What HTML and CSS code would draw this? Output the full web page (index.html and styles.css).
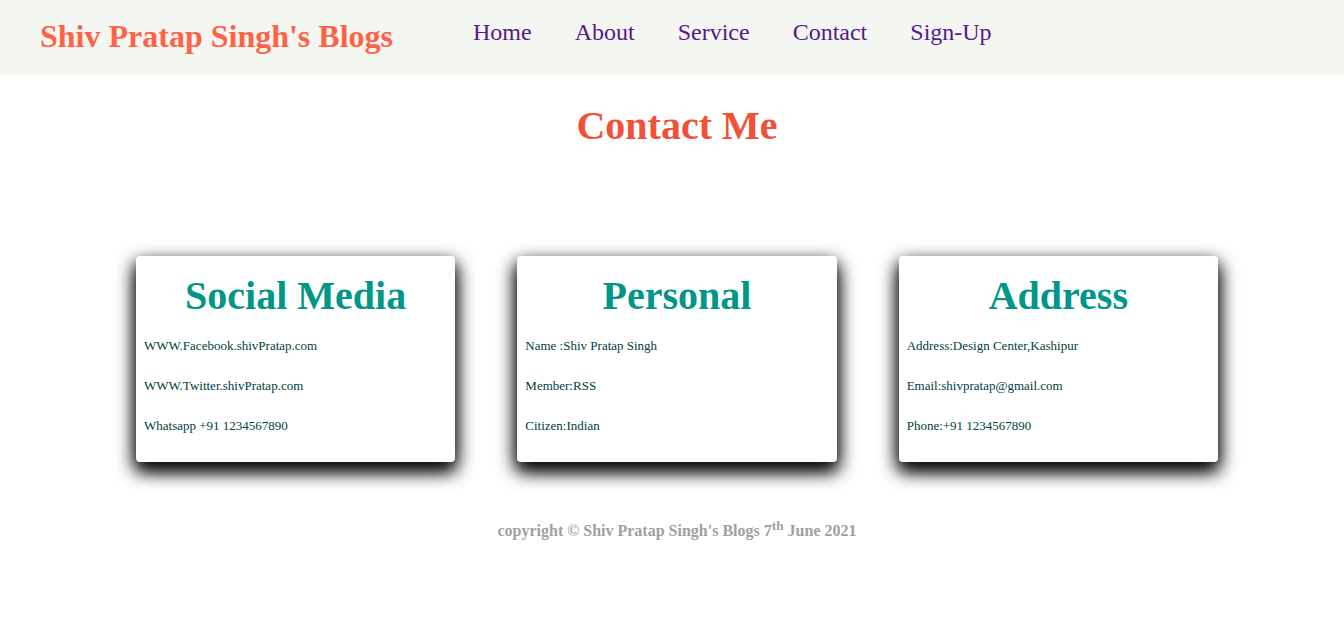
FILE: index.html
```html
<!DOCTYPE html>
<html lang="en">
<head>
<meta charset="utf-8">
<title>Contact Me</title>
<link rel="stylesheet" href="styles.css">
</head>
<body>
<header class="topbar">
  <h1 class="brand">Shiv Pratap Singh's Blogs</h1>
  <nav class="menu">
    <a href="#home">Home</a>
    <a href="#about">About</a>
    <a href="#service">Service</a>
    <a href="#contact">Contact</a>
    <a href="#signup">Sign-Up</a>
  </nav>
</header>
<main>
  <h1 class="title">Contact Me</h1>
  <div class="cards">
    <section class="card">
      <h2>Social Media</h2>
      <p>WWW.Facebook.shivPratap.com</p>
      <p>WWW.Twitter.shivPratap.com</p>
      <p>Whatsapp +91 1234567890</p>
    </section>
    <section class="card">
      <h2>Personal</h2>
      <p>Name :Shiv Pratap Singh</p>
      <p>Member:RSS</p>
      <p>Citizen:Indian</p>
    </section>
    <section class="card">
      <h2>Address</h2>
      <p>Address:Design Center,Kashipur</p>
      <p>Email:shivpratap@gmail.com</p>
      <p>Phone:+91 1234567890</p>
    </section>
  </div>
</main>
<footer class="footer">copyright © Shiv Pratap Singh's Blogs 7<sup>th</sup> June 2021</footer>
</body>
</html>
```
FILE: styles.css
```css
* {
  box-sizing: border-box;
}
body {
  margin: 0;
  background: #fff;
  font-family: "Liberation Serif", "Times New Roman", serif;
}
.topbar {
  display: flex;
  align-items: flex-start;
  gap: 80px;
  padding: 16px 40px 19px;
  background: #f4f6f1;
}
.brand {
  margin: 0;
  color: tomato;
  font-size: 32px;
  line-height: 40px;
}
.menu {
  display: flex;
  gap: 43px;
}
.menu a {
  color: #551a8b;
  font-size: 24px;
  line-height: 32px;
  text-decoration: none;
}
.title {
  margin: 28px 0 0;
  padding-left: 10px;
  color: #f05237;
  font-size: 40px;
  line-height: 46px;
  text-align: center;
}
.cards {
  display: grid;
  grid-template-columns: repeat(3, 1fr);
  gap: 62px;
  margin: 107px 126px 0 136px;
}
.card {
  padding: 17px 8px 28px;
  border-radius: 4px;
  background: #fff;
  box-shadow: 0 8px 16px 0 rgba(0, 0, 0, 0.7), 0 8px 20px 0 #000;
}
.card h2 {
  margin: 0;
  color: #009688;
  font-size: 40px;
  line-height: 46px;
  text-align: center;
}
.card p {
  margin: 0 0 24px;
  color: #004040;
  font-size: 13px;
  line-height: 16px;
}
.card h2 + p {
  margin-top: 19px;
}
.card p:last-child {
  margin-bottom: 0;
}
.footer {
  margin-top: 55px;
  padding-left: 10px;
  color: #a0a0a0;
  font-size: 16px;
  font-weight: bold;
  line-height: 18px;
  text-align: center;
}
```
